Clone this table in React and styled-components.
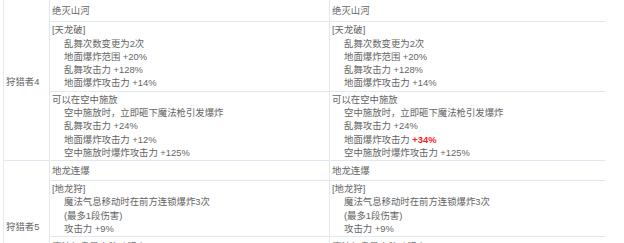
import React from "react";
import styled, { createGlobalStyle } from "styled-components";

const Global = createGlobalStyle`
  html, body { margin: 0; padding: 0; background: #fff; }
  body { font-family: "Liberation Sans", "Noto Sans CJK SC", sans-serif; }
`;

const Page = styled.div`
  padding-left: 3px;
  width: 624px;
  height: 243px;
  overflow: hidden;
  box-sizing: border-box;
`;

const Grid = styled.div`
  display: grid;
  grid-template-columns: 46px 280px 275px;
  grid-template-rows: 22px 70px 69px 20px 56px 57px;
  border-left: 1px solid #e3e9f0;
  font-size: 9.4px;
  line-height: 13.3px;
  color: #646464;
`;

const LabelCell = styled.div`
  grid-row: ${(p) => p.$rows};
  grid-column: 1;
  box-sizing: border-box;
  border-right: 1px solid #e3e9f0;
  border-bottom: 1px solid #dfe8f2;
  display: flex;
  align-items: center;
  padding: ${(p) => p.$top}px 0 0 2px;
  white-space: nowrap;
`;

const Cell = styled.div`
  box-sizing: border-box;
  border-bottom: 1px solid #dfe8f2;
  border-right: ${(p) => (p.$last ? "none" : "1px solid #e3e9f0")};
  display: flex;
  flex-direction: column;
  justify-content: ${(p) => (p.$top ? "flex-start" : "center")};
  padding: ${(p) => (p.$top ? "3px 2px 0 2px" : "0 2px")};
  white-space: nowrap;
  overflow: hidden;
`;

const Line = styled.div`
  padding-left: ${(p) => (p.$indent ? "12px" : "0")};
`;

const Hot = styled.span`
  color: #ff1a1a;
  font-weight: bold;
`;

const rows = [
  { key: "a", lines: [["绝灭山河"]] },
  {
    key: "b",
    lines: [
      ["[天龙破]"],
      ["乱舞次数变更为2次", 1],
      ["地面爆炸范围 +20%", 1],
      ["乱舞攻击力 +128%", 1],
      ["地面爆炸攻击力 +14%", 1],
    ],
  },
  {
    key: "c",
    lines: [
      ["可以在空中施放"],
      ["空中施放时，立即砸下魔法枪引发爆炸", 1],
      ["乱舞攻击力 +24%", 1],
      ["地面爆炸攻击力 +12%", 1, "hot"],
      ["空中施放时爆炸攻击力 +125%", 1],
    ],
  },
  { key: "d", lines: [["地龙连爆"]] },
  {
    key: "e",
    lines: [
      ["[地龙狩]"],
      ["魔法气息移动时在前方连锁爆炸3次", 1],
      ["(最多1段伤害)", 1],
      ["攻击力 +9%", 1],
    ],
  },
  {
    key: "f",
    top: true,
    lines: [
      ["魔法气息最大移动距离 +30%"],
      ["魔法气息移动速度 +30%", 1],
      ["爆炸范围 +20%", 1],
      ["攻击力 +15%", 1],
    ],
  },
];

function renderLines(lines, second) {
  return lines.map(([text, indent, hot], i) => {
    if (second && hot) {
      return (
        <Line key={i} $indent={indent}>
          地面爆炸攻击力 <Hot>+34%</Hot>
        </Line>
      );
    }
    return (
      <Line key={i} $indent={indent}>
        {text}
      </Line>
    );
  });
}

export default function App() {
  return (
    <>
      <Global />
      <Page>
        <Grid>
          <LabelCell $rows="1 / span 3" $top={4}>狩猎者4</LabelCell>
          <LabelCell $rows="4 / span 3" $top={0}>狩猎者5</LabelCell>
          {rows.map((r) => (
            <React.Fragment key={r.key}>
              <Cell $top={r.top}>{renderLines(r.lines, false)}</Cell>
              <Cell $top={r.top} $last>
                {renderLines(r.lines, true)}
              </Cell>
            </React.Fragment>
          ))}
        </Grid>
      </Page>
    </>
  );
}
